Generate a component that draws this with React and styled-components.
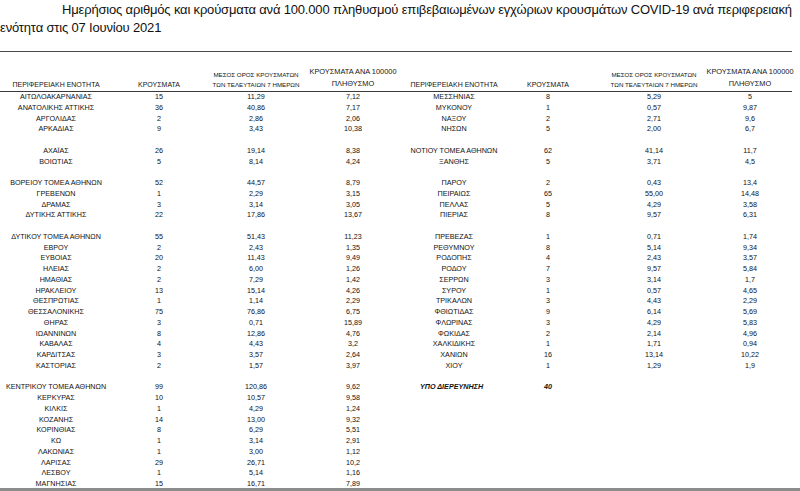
import React from 'react';
import styled, { createGlobalStyle } from 'styled-components';

const GlobalStyle = createGlobalStyle`
  html, body {
    margin: 0;
    padding: 0;
    background: #ffffff;
  }
  body {
    font-family: "Liberation Sans", Arial, sans-serif;
    color: #1e1e1e;
    overflow: hidden;
  }
`;

const LEFT_COLS = '112px 94px 100px 94px';
const RIGHT_COLS = '108px 80px 132px 60px';

const leftRows = [
  [
    ['ΑΙΤΩΛΟΑΚΑΡΝΑΝΙΑΣ', '15', '11,29', '7,12'],
    ['ΑΝΑΤΟΛΙΚΗΣ ΑΤΤΙΚΗΣ', '36', '40,86', '7,17'],
    ['ΑΡΓΟΛΙΔΑΣ', '2', '2,86', '2,06'],
    ['ΑΡΚΑΔΙΑΣ', '9', '3,43', '10,38'],
  ],
  [
    ['ΑΧΑΪΑΣ', '26', '19,14', '8,38'],
    ['ΒΟΙΩΤΙΑΣ', '5', '8,14', '4,24'],
  ],
  [
    ['ΒΟΡΕΙΟΥ ΤΟΜΕΑ ΑΘΗΝΩΝ', '52', '44,57', '8,79'],
    ['ΓΡΕΒΕΝΩΝ', '1', '2,29', '3,15'],
    ['ΔΡΑΜΑΣ', '3', '3,14', '3,05'],
    ['ΔΥΤΙΚΗΣ ΑΤΤΙΚΗΣ', '22', '17,86', '13,67'],
  ],
  [
    ['ΔΥΤΙΚΟΥ ΤΟΜΕΑ ΑΘΗΝΩΝ', '55', '51,43', '11,23'],
    ['ΕΒΡΟΥ', '2', '2,43', '1,35'],
    ['ΕΥΒΟΙΑΣ', '20', '11,43', '9,49'],
    ['ΗΛΕΙΑΣ', '2', '6,00', '1,26'],
    ['ΗΜΑΘΙΑΣ', '2', '7,29', '1,42'],
    ['ΗΡΑΚΛΕΙΟΥ', '13', '15,14', '4,26'],
    ['ΘΕΣΠΡΩΤΙΑΣ', '1', '1,14', '2,29'],
    ['ΘΕΣΣΑΛΟΝΙΚΗΣ', '75', '76,86', '6,75'],
    ['ΘΗΡΑΣ', '3', '0,71', '15,89'],
    ['ΙΩΑΝΝΙΝΩΝ', '8', '12,86', '4,76'],
    ['ΚΑΒΑΛΑΣ', '4', '4,43', '3,2'],
    ['ΚΑΡΔΙΤΣΑΣ', '3', '3,57', '2,64'],
    ['ΚΑΣΤΟΡΙΑΣ', '2', '1,57', '3,97'],
  ],
  [
    ['ΚΕΝΤΡΙΚΟΥ ΤΟΜΕΑ ΑΘΗΝΩΝ', '99', '120,86', '9,62'],
    ['ΚΕΡΚΥΡΑΣ', '10', '10,57', '9,58'],
    ['ΚΙΛΚΙΣ', '1', '4,29', '1,24'],
    ['ΚΟΖΑΝΗΣ', '14', '13,00', '9,32'],
    ['ΚΟΡΙΝΘΙΑΣ', '8', '6,29', '5,51'],
    ['ΚΩ', '1', '3,14', '2,91'],
    ['ΛΑΚΩΝΙΑΣ', '1', '3,00', '1,12'],
    ['ΛΑΡΙΣΑΣ', '29', '26,71', '10,2'],
    ['ΛΕΣΒΟΥ', '1', '5,14', '1,16'],
    ['ΜΑΓΝΗΣΙΑΣ', '15', '16,71', '7,89'],
  ],
];

const rightRows = [
  [
    ['ΜΕΣΣΗΝΙΑΣ', '8', '5,29', '5'],
    ['ΜΥΚΟΝΟΥ', '1', '0,57', '9,87'],
    ['ΝΑΞΟΥ', '2', '2,71', '9,6'],
    ['ΝΗΣΩΝ', '5', '2,00', '6,7'],
  ],
  [
    ['ΝΟΤΙΟΥ ΤΟΜΕΑ ΑΘΗΝΩΝ', '62', '41,14', '11,7'],
    ['ΞΑΝΘΗΣ', '5', '3,71', '4,5'],
  ],
  [
    ['ΠΑΡΟΥ', '2', '0,43', '13,4'],
    ['ΠΕΙΡΑΙΩΣ', '65', '55,00', '14,48'],
    ['ΠΕΛΛΑΣ', '5', '4,29', '3,58'],
    ['ΠΙΕΡΙΑΣ', '8', '9,57', '6,31'],
  ],
  [
    ['ΠΡΕΒΕΖΑΣ', '1', '0,71', '1,74'],
    ['ΡΕΘΥΜΝΟΥ', '8', '5,14', '9,34'],
    ['ΡΟΔΟΠΗΣ', '4', '2,43', '3,57'],
    ['ΡΟΔΟΥ', '7', '9,57', '5,84'],
    ['ΣΕΡΡΩΝ', '3', '3,14', '1,7'],
    ['ΣΥΡΟΥ', '1', '0,57', '4,65'],
    ['ΤΡΙΚΑΛΩΝ', '3', '4,43', '2,29'],
    ['ΦΘΙΩΤΙΔΑΣ', '9', '6,14', '5,69'],
    ['ΦΛΩΡΙΝΑΣ', '3', '4,29', '5,83'],
    ['ΦΩΚΙΔΑΣ', '2', '2,14', '4,96'],
    ['ΧΑΛΚΙΔΙΚΗΣ', '1', '1,71', '0,94'],
    ['ΧΑΝΙΩΝ', '16', '13,14', '10,22'],
    ['ΧΙΟΥ', '1', '1,29', '1,9'],
  ],
];

const Page = styled.div`
  width: 800px;
  height: 491px;
  overflow: hidden;
`;

const Title = styled.header`
  height: 52px;
  border-bottom: 1px solid #4a4a4a;
  width: 792px;
  padding-top: 1px;
  box-sizing: border-box;
`;

const TitleLine = styled.div`
  padding-left: ${p => p.indent || 0}px;
  font-size: 13px;
  line-height: 18px;
  color: #111;
  white-space: nowrap;
  letter-spacing: -0.17px;
`;

const Head = styled.div`
  display: flex;
  width: 792px;
  height: 40px;
  box-sizing: border-box;
  border-bottom: 1px solid #3a3a3a;
`;

const HeadGrid = styled.div`
  display: grid;
  grid-template-columns: ${p => p.cols};
  align-items: end;
  padding-bottom: 1px;
`;

const HeadCell = styled.div`
  display: flex;
  flex-direction: column;
  align-items: center;
  font-size: ${p => p.size || 7}px;
  line-height: ${p => p.lh || 10}px;
  white-space: nowrap;
  color: #151515;
`;

const Body = styled.div`
  display: flex;
`;

const BodyGrid = styled.div`
  display: grid;
  grid-template-columns: ${p => p.cols};
  grid-auto-rows: 10.75px;
  align-content: start;
`;

const Cell = styled.div`
  display: flex;
  justify-content: ${p => (p.left ? 'flex-start' : 'center')};
  padding-left: ${p => (p.left ? 20 : 0)}px;
  font-size: 7.2px;
  line-height: 10.75px;
  white-space: nowrap;
  color: #111;
  font-style: ${p => (p.italic ? 'italic' : 'normal')};
  font-weight: ${p => (p.italic ? 'bold' : 'normal')};
`;

const Spacer = styled.div`
  grid-column: 1 / -1;
`;

const PageEdge = styled.div`
  position: fixed;
  left: 0;
  right: 0;
  bottom: 0;
  height: 3px;
  background: #8c8c8c;
`;

const HeaderCells = () => (
  <>
    <HeadCell>ΠΕΡΙΦΕΡΕΙΑΚΗ ΕΝΟΤΗΤΑ</HeadCell>
    <HeadCell>ΚΡΟΥΣΜΑΤΑ</HeadCell>
    <HeadCell size={6.2} lh={10}>
      <span>ΜΕΣΟΣ ΟΡΟΣ ΚΡΟΥΣΜΑΤΩΝ</span>
      <span>ΤΩΝ ΤΕΛΕΥΤΑΙΩΝ 7 ΗΜΕΡΩΝ</span>
    </HeadCell>
    <HeadCell size={7.4} lh={12}>
      <span>ΚΡΟΥΣΜΑΤΑ ΑΝΑ 100000</span>
      <span>ΠΛΗΘΥΣΜΟ</span>
    </HeadCell>
  </>
);

const Rows = ({ groups }) =>
  groups.map((group, gi) => (
    <React.Fragment key={gi}>
      {gi > 0 && <Spacer />}
      {group.map(row =>
        row.map((value, ci) => <Cell key={row[0] + ci}>{value}</Cell>)
      )}
    </React.Fragment>
  ));

export default function App() {
  return (
    <Page>
      <GlobalStyle />
      <Title>
        <TitleLine indent={62}>
          Ημερήσιος αριθμός και κρούσματα ανά 100.000 πληθυσμού επιβεβαιωμένων εγχώριων κρουσμάτων COVID-19 ανά περιφερειακή
        </TitleLine>
        <TitleLine>ενότητα στις 07 Ιουνίου 2021</TitleLine>
      </Title>

      <Head>
        <HeadGrid cols={LEFT_COLS}>
          <HeaderCells />
        </HeadGrid>
        <HeadGrid cols={RIGHT_COLS}>
          <HeaderCells />
        </HeadGrid>
      </Head>

      <Body>
        <BodyGrid cols={LEFT_COLS}>
          <Rows groups={leftRows} />
        </BodyGrid>
        <BodyGrid cols={RIGHT_COLS}>
          <Rows groups={rightRows} />
          <Spacer />
          <Cell left italic>ΥΠΟ ΔΙΕΡΕΥΝΗΣΗ</Cell>
          <Cell italic>40</Cell>
        </BodyGrid>
      </Body>

      <PageEdge />
    </Page>
  );
}
